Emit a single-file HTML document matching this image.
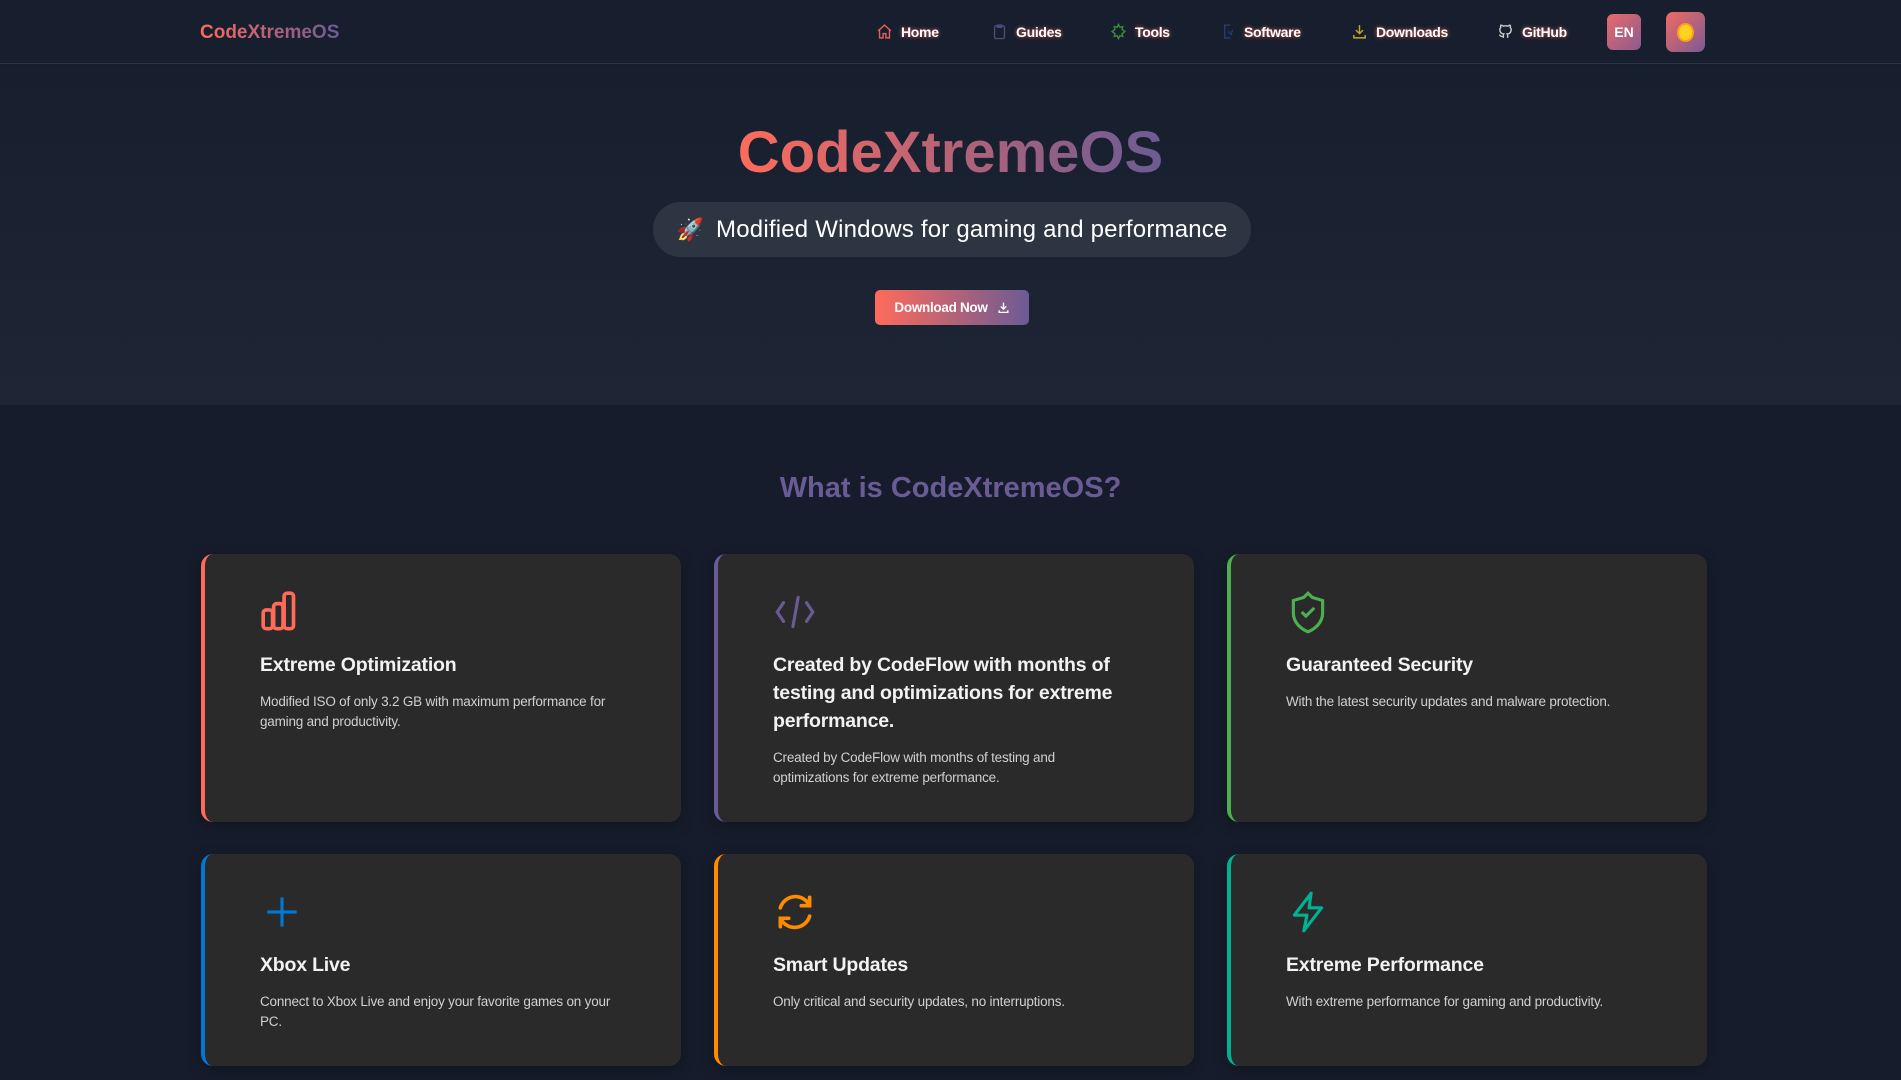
<!DOCTYPE html>
<html><head><meta charset="utf-8"><style>
*{margin:0;padding:0;box-sizing:border-box}
body{width:1901px;height:1080px;overflow:hidden;background:#161c2b;font-family:"Liberation Sans",sans-serif;color:#fff;position:relative}
.nav{position:absolute;left:0;top:0;width:1901px;height:64px;background:#171e2d;border-bottom:1px solid #2c3444}
.logo{position:absolute;left:200px;top:22px;font-size:19px;font-weight:bold;background:linear-gradient(90deg,#ff6b5b,#6b5b95);-webkit-background-clip:text;color:transparent}
.ni{position:absolute;top:23px;font-size:14px;font-weight:bold;color:#fff;text-shadow:0 0 4px rgba(255,107,91,.8);display:flex;align-items:center;gap:8px;letter-spacing:-0.3px}
.ni svg{width:17px;height:17px}
.en{position:absolute;left:1607px;top:14px;width:34px;height:36px;border-radius:6px;background:linear-gradient(135deg,#e86a6a,#8a5b8f);font-size:14px;font-weight:bold;display:flex;align-items:center;justify-content:center}
.sun{position:absolute;left:1666px;top:12px;width:39px;height:40px;border-radius:7px;background:linear-gradient(135deg,#f06a62,#7a5b93);display:flex;align-items:center;justify-content:center}
.sun i{width:13px;height:15px;border-radius:50%;background:#ffd21f;box-shadow:0 0 0 2px #ff9f1a}
.hero{position:absolute;left:0;top:65px;width:1901px;height:340px;background:linear-gradient(180deg,#171e2d,#1e2636)}
h1{position:absolute;left:0;width:1901px;top:118px;text-align:center;font-size:58px;line-height:70px;font-weight:bold}
h1 span{background:linear-gradient(90deg,#ff6b5b,#6b5b95);-webkit-background-clip:text;color:transparent}
.pill{position:absolute;left:653px;top:202px;width:598px;height:55px;border-radius:28px;background:#2e3542;display:flex;align-items:center;justify-content:center;font-size:24px;color:#fff;gap:12px;letter-spacing:0.2px}
.btn{position:absolute;left:875px;top:290px;width:154px;height:35px;border-radius:5px;background:linear-gradient(90deg,#ff6b5b,#6b5b95);font-size:13.5px;font-weight:bold;display:flex;align-items:center;justify-content:center;gap:9px;letter-spacing:-0.3px}
h2{position:absolute;left:0;width:1901px;top:472px;text-align:center;font-size:29px;font-weight:bold;color:#6b5b95}
.card{position:absolute;width:480px;background:#2a2a2a;border-radius:12px;border-left:4px solid;padding:35px 52px 0 55px;box-shadow:0 4px 14px rgba(0,0,0,.25)}
.card svg{width:46px;height:46px;display:block;margin-left:-1px}
.card h3{font-size:19.5px;line-height:28px;margin-top:16px;color:#f2f2f2;letter-spacing:-0.2px}
.card p{font-size:13.5px;line-height:20px;color:#d0d0d0;margin-top:13px;letter-spacing:-0.2px}
</style></head><body>
<div class="nav">
<div class="logo">CodeXtremeOS</div>
<div class="ni" style="left:876px"><svg viewBox="0 0 24 24" fill="none" stroke="#e0605a" stroke-width="2"><path d="M3 11l9-8 9 8M5 9v12h5v-6h4v6h5V9"/></svg>Home</div>
<div class="ni" style="left:991px"><svg viewBox="0 0 24 24" fill="none" stroke="#4d4a78" stroke-width="2"><rect x="5" y="4" width="14" height="18" rx="2"/><path d="M9 3h6v3H9z"/></svg>Guides</div>
<div class="ni" style="left:1110px"><svg viewBox="0 0 24 24" fill="none" stroke="#3a8a3e" stroke-width="2"><path d="M12 2l2 4 4-1-1 4 4 3-4 3 1 4-4-1-2 4-2-4-4 1 1-4-4-3 4-3-1-4 4 1z"/></svg>Tools</div>
<div class="ni" style="left:1219px"><svg viewBox="0 0 24 24" fill="none" stroke="#263a73" stroke-width="2"><path d="M16 3H8v18h8M13 12l4 4 2-6"/></svg>Software</div>
<div class="ni" style="left:1351px"><svg viewBox="0 0 24 24" fill="none" stroke="#c8a81e" stroke-width="2"><path d="M12 3v12M7 10l5 5 5-5M4 17v4h16v-4"/></svg>Downloads</div>
<div class="ni" style="left:1497px"><svg viewBox="0 0 24 24" fill="none" stroke="#ccc" stroke-width="2"><path d="M9 19c-4 1-4-2-6-2m12 4v-3.5c0-1 .1-1.4-.5-2 2.8-.3 5.5-1.4 5.5-6a4.6 4.6 0 00-1.3-3.2 4.2 4.2 0 00-.1-3.2s-1.1-.3-3.5 1.3a12 12 0 00-6.2 0C6.5 2.8 5.4 3.1 5.4 3.1a4.2 4.2 0 00-.1 3.2A4.6 4.6 0 004 9.5c0 4.6 2.7 5.7 5.5 6-.6.6-.6 1.2-.5 2V21"/></svg>GitHub</div>
<div class="en">EN</div>
<div class="sun"><i></i></div>
</div>
<div class="hero"></div>
<h1><span>CodeXtremeOS</span></h1>
<div class="pill"><span style="font-size:22px">🚀</span>Modified Windows for gaming and performance</div>
<div class="btn">Download Now <svg width="13" height="13" viewBox="0 0 24 24" fill="none" stroke="#fff" stroke-width="2.5"><path d="M12 3v12M7 10l5 5 5-5M4 17v4h16v-4"/></svg></div>
<h2>What is CodeXtremeOS?</h2>

<div class="card" style="left:201px;top:554px;height:268px;border-color:#ff6b5b">
<svg viewBox="0 0 44 44" fill="none" stroke="#ff6b5b" stroke-width="3.5"><rect x="4" y="20" width="9" height="18" rx="3"/><rect x="14" y="14" width="9" height="24" rx="3"/><rect x="24" y="4" width="9" height="34" rx="3"/></svg>
<h3>Extreme Optimization</h3>
<p>Modified ISO of only 3.2 GB with maximum performance for gaming and productivity.</p></div>

<div class="card" style="left:714px;top:554px;height:268px;border-color:#6b5b95">
<svg viewBox="0 0 44 44" fill="none" stroke="#6b5b95" stroke-width="3" stroke-linecap="round"><path d="M11 13l-6 9 6 9M33 13l6 9-6 9M25 8l-5 28"/></svg>
<h3>Created by CodeFlow with months of<br>testing and optimizations for extreme<br>performance.</h3>
<p>Created by CodeFlow with months of testing and<br>optimizations for extreme performance.</p></div>

<div class="card" style="left:1227px;top:554px;height:268px;border-color:#4caf50">
<svg viewBox="0 0 44 44" fill="none" stroke="#4caf50" stroke-width="3"><path d="M22 4l4 4 10 3v12c0 9-7 15-14 18C15 38 8 32 8 23V11l10-3z"/><path d="M16 22l4 4 8-8"/></svg>
<h3>Guaranteed Security</h3>
<p>With the latest security updates and malware protection.</p></div>

<div class="card" style="left:201px;top:854px;height:212px;border-color:#0078d4">
<svg viewBox="0 0 44 44" fill="none" stroke="#0078d4" stroke-width="3"><path d="M22 8v28M8 22h28"/></svg>
<h3>Xbox Live</h3>
<p>Connect to Xbox Live and enjoy your favorite games on your<br>PC.</p></div>

<div class="card" style="left:714px;top:854px;height:212px;border-color:#ff8c00">
<svg viewBox="0 0 44 44" fill="none" stroke="#ff8c00" stroke-width="3.5" stroke-linecap="round"><path d="M8 18A15 15 0 0136 16M36 8v8h-8M36 26A15 15 0 018 28M8 36v-8h8"/></svg>
<h3>Smart Updates</h3>
<p>Only critical and security updates, no interruptions.</p></div>

<div class="card" style="left:1227px;top:854px;height:212px;border-color:#00b294">
<svg viewBox="0 0 44 44" fill="none" stroke="#00b294" stroke-width="3" stroke-linejoin="round"><path d="M25 4L9 25h12l-3 15 17-22H23z"/></svg>
<h3>Extreme Performance</h3>
<p>With extreme performance for gaming and productivity.</p></div>
</body></html>
